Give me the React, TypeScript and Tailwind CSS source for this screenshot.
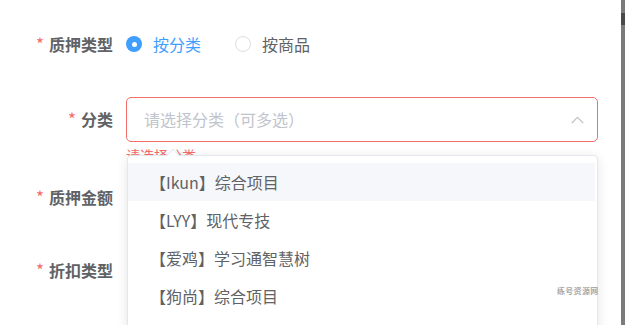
const font = { fontFamily: '"Noto Sans CJK SC", "Noto Sans", sans-serif' };

function Label({ text }: { text: string }) {
  return (
    <div className="w-[113px] shrink-0 flex items-center justify-end text-[16px] font-bold text-[#606266]">
      <span className="text-[#f56c6c] font-normal text-[17px] mr-[5px]">*</span>
      {text}
    </div>
  );
}

const options = ['【Ikun】综合项目', '【LYY】现代专技', '【爱鸡】学习通智慧树', '【狗尚】综合项目'];

export default function App() {
  return (
    <div className="w-[625px] h-[325px] overflow-hidden bg-white flex" style={font}>
      <div className="relative flex-1 pt-[22px]">
        {/* 质押类型 */}
        <div className="flex items-center h-[44px]">
          <Label text="质押类型" />
          <div className="ml-[13px] flex items-center">
            <span className="w-4 h-4 rounded-full bg-[#409eff] flex items-center justify-center">
              <span className="w-[5px] h-[5px] rounded-full bg-white" />
            </span>
            <span className="ml-[11px] text-[16px] text-[#409eff]">按分类</span>
            <span className="ml-[34px] w-4 h-4 rounded-full border border-[#dcdfe6] bg-white" />
            <span className="ml-[11px] text-[16px] text-[#606266]">按商品</span>
          </div>
        </div>

        {/* 分类 */}
        <div className="flex items-center h-[44px] mt-[31px]">
          <Label text="分类" />
          <div className="relative ml-[13px] w-[472px] h-[45px]">
            <div className="h-full border border-[#f56c6c] rounded-[5px] flex items-center justify-between pl-[17px] pr-[13px] bg-white">
              <span className="text-[16px] text-[#c0c4cc]">请选择分类（可多选）</span>
              <svg width="13" height="8" viewBox="0 0 13 8" className="mt-[2px]">
                <path d="M0.8 7 L6.5 1.3 L12.2 7" fill="none" stroke="#c0c4cc" strokeWidth="1.3" />
              </svg>
            </div>
            <div className="absolute left-0 top-full mt-[6px] text-[14px] leading-none text-[#f56c6c]">请选择分类</div>

            {/* dropdown */}
            <div className="absolute left-[1px] right-0 top-[calc(100%+13px)] z-10 bg-white border border-[#e4e7ed] rounded-[4px] shadow-[0_2px_12px_0_rgba(0,0,0,0.1)] py-[7px]">
              <div className="absolute -top-[7px] left-[38px] w-0 h-0 border-x-[7px] border-x-transparent border-b-[7px] border-b-[#e4e7ed]" />
              <div className="absolute -top-[6px] left-[39px] w-0 h-0 border-x-[6px] border-x-transparent border-b-[6px] border-b-white" />
              {options.map((o, i) => (
                <div
                  key={o}
                  className={`h-[38px] mr-[2px] flex items-center px-[22px] text-[16px] text-[#606266] ${i === 0 ? 'bg-[#f5f7fa]' : ''}`}
                >
                  {o}
                </div>
              ))}
              <div className="h-[60px]" />
            </div>
          </div>
        </div>

        {/* 质押金额 */}
        <div className="flex items-center h-[44px] mt-[34px]">
          <Label text="质押金额" />
        </div>

        {/* 折扣类型 */}
        <div className="flex items-center h-[44px] mt-[29px]">
          <Label text="折扣类型" />
        </div>

        <div className="absolute left-[557px] top-[287px] z-20 text-[8px] font-bold text-[#aaaaaa] leading-none tracking-[0.3px]">
          练号资源网
        </div>
      </div>
      <div className="w-[4px] shrink-0 bg-[#7b7b7b] flex flex-col">
        <div className="mt-[13px] h-[12px] bg-[#4a4a4a]" />
      </div>
    </div>
  );
}
